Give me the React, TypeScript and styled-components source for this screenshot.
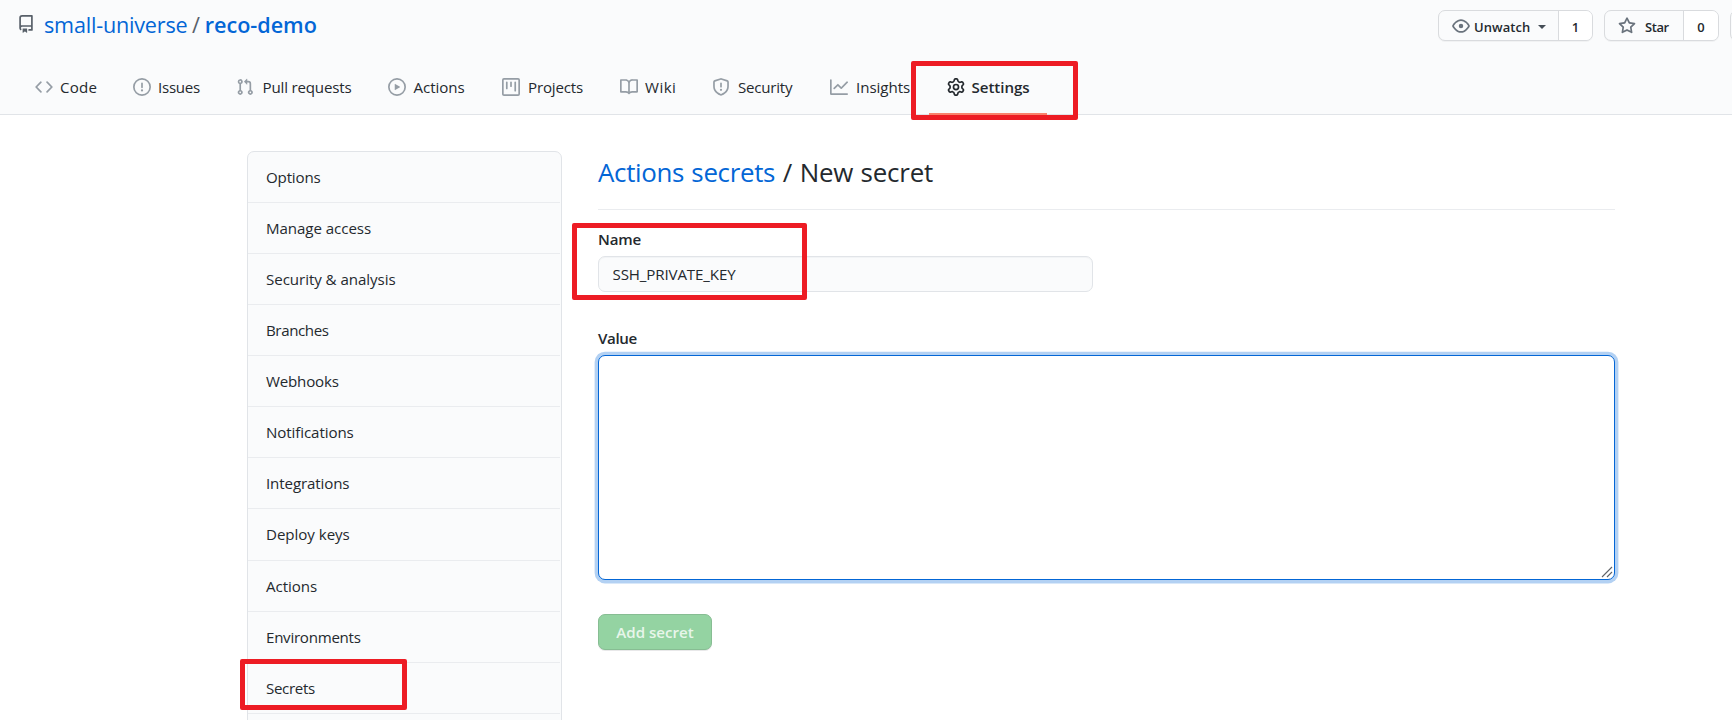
import React from "react";
import styled, { createGlobalStyle } from "styled-components";

const GlobalStyle = createGlobalStyle`
  *, *::before, *::after { box-sizing: border-box; }
  html, body { margin: 0; padding: 0; background: #fff; overflow: hidden; }
  body {
    font-family: "Open Sans", "Noto Sans", sans-serif;
    font-size: 15.12px;
    color: #24292e;
  }
  a { color: inherit; text-decoration: none; }
`;

const ICONS = {
  repo: "M2 2.5A2.5 2.5 0 014.5 0h8.75a.75.75 0 01.75.75v12.5a.75.75 0 01-.75.75h-2.5a.75.75 0 110-1.5h1.75v-2h-8a1 1 0 00-.714 1.7.75.75 0 01-1.072 1.05A2.495 2.495 0 012 11.5v-9zm10.5-1V9h-8c-.356 0-.694.074-1 .208V2.5a1 1 0 011-1h8zM5 12.25v3.25a.25.25 0 00.4.2l1.45-1.087a.25.25 0 01.3 0L8.6 15.7a.25.25 0 00.4-.2v-3.25a.25.25 0 00-.25-.25h-3.5a.25.25 0 00-.25.25z",
  code: "M4.72 3.22a.75.75 0 011.06 1.06L2.06 8l3.72 3.72a.75.75 0 11-1.06 1.06L.47 8.53a.75.75 0 010-1.06l4.25-4.25zm6.56 0a.75.75 0 10-1.06 1.06L13.94 8l-3.72 3.72a.75.75 0 101.06 1.06l4.25-4.25a.75.75 0 000-1.06l-4.25-4.25z",
  issue: "M8 1.5a6.5 6.5 0 100 13 6.5 6.5 0 000-13zM0 8a8 8 0 1116 0A8 8 0 010 8zm9 3a1 1 0 11-2 0 1 1 0 012 0zm-.25-6.25a.75.75 0 00-1.5 0v3.5a.75.75 0 001.5 0v-3.5z",
  pull: "M7.177 3.073L9.573.677A.25.25 0 0110 .854v4.792a.25.25 0 01-.427.177L7.177 3.427a.25.25 0 010-.354zM3.75 2.5a.75.75 0 100 1.5.75.75 0 000-1.5zm-2.25.75a2.25 2.25 0 113 2.122v5.256a2.251 2.251 0 11-1.5 0V5.372A2.25 2.25 0 011.5 3.25zM11 2.5h-1V4h1a1 1 0 011 1v5.628a2.251 2.251 0 101.5 0V5A2.5 2.5 0 0011 2.5zm1 10.25a.75.75 0 111.5 0 .75.75 0 01-1.5 0zM3.75 12a.75.75 0 100 1.5.75.75 0 000-1.5z",
  play: "M1.5 8a6.5 6.5 0 1113 0 6.5 6.5 0 01-13 0zM8 0a8 8 0 100 16A8 8 0 008 0zM6.379 5.227A.25.25 0 006 5.442v5.117a.25.25 0 00.379.214l4.264-2.559a.25.25 0 000-.428L6.379 5.227z",
  project: "M1.75 0A1.75 1.75 0 000 1.75v12.5C0 15.216.784 16 1.75 16h12.5A1.75 1.75 0 0016 14.25V1.75A1.75 1.75 0 0014.25 0H1.75zM1.5 1.75a.25.25 0 01.25-.25h12.5a.25.25 0 01.25.25v12.5a.25.25 0 01-.25.25H1.75a.25.25 0 01-.25-.25V1.75zM11.75 3a.75.75 0 00-.75.75v7.5a.75.75 0 001.5 0v-7.5a.75.75 0 00-.75-.75zm-8.25.75a.75.75 0 011.5 0v5.5a.75.75 0 01-1.5 0v-5.5zM8 3a.75.75 0 00-.75.75v3.5a.75.75 0 001.5 0v-3.5A.75.75 0 008 3z",
  book: "M0 1.75A.75.75 0 01.75 1h4.253c1.227 0 2.317.59 3 1.501A3.744 3.744 0 0111.006 1h4.245a.75.75 0 01.75.75v10.5a.75.75 0 01-.75.75h-4.507a2.25 2.25 0 00-1.591.659l-.622.621a.75.75 0 01-1.06 0l-.622-.621A2.25 2.25 0 005.258 13H.75a.75.75 0 01-.75-.75V1.75zm8.755 3a2.25 2.25 0 012.25-2.25H14.5v9h-3.757c-.71 0-1.4.201-1.992.572l.004-7.322zm-1.504 7.324l.004-5.073-.002-2.253A2.25 2.25 0 005.003 2.5H1.5v9h3.757a3.75 3.75 0 011.994.574z",
  shield: "M7.467.133a1.75 1.75 0 011.066 0l5.25 1.68A1.75 1.75 0 0115 3.48V7c0 1.566-.32 3.182-1.303 4.682-.983 1.498-2.585 2.813-5.032 3.855a1.7 1.7 0 01-1.33 0c-2.447-1.042-4.049-2.357-5.032-3.855C1.32 10.182 1 8.566 1 7V3.48a1.75 1.75 0 011.217-1.667l5.25-1.68zm.61 1.429a.25.25 0 00-.153 0l-5.25 1.68a.25.25 0 00-.174.238V7c0 1.358.275 2.666 1.057 3.86.784 1.194 2.121 2.34 4.366 3.297a.2.2 0 00.154 0c2.245-.956 3.582-2.104 4.366-3.298C13.225 9.666 13.5 8.36 13.5 7V3.48a.25.25 0 00-.174-.237l-5.25-1.68zM9 10.5a1 1 0 11-2 0 1 1 0 012 0zm-.25-5.75a.75.75 0 10-1.5 0v3a.75.75 0 001.5 0v-3z",
  graph: "M1.5 1.75a.75.75 0 00-1.5 0v12.5c0 .414.336.75.75.75h14.5a.75.75 0 000-1.5H1.5V1.75zm14.28 2.53a.75.75 0 00-1.06-1.06L10 7.94 7.53 5.47a.75.75 0 00-1.06 0L3.22 8.72a.75.75 0 001.06 1.06L7 7.06l2.47 2.47a.75.75 0 001.06 0l5.25-5.25z",
  gear: "M7.429 1.525a6.593 6.593 0 011.142 0c.036.003.108.036.137.146l.289 1.105c.147.56.55.967.997 1.189.174.086.341.183.501.29.417.278.97.423 1.53.27l1.102-.303c.11-.03.175.016.195.046.219.31.41.641.573.989.014.031.022.11-.059.19l-.815.806c-.411.406-.562.957-.53 1.456a4.588 4.588 0 010 .582c-.032.499.119 1.05.53 1.456l.815.806c.08.08.073.159.059.19a6.494 6.494 0 01-.573.99c-.02.029-.086.074-.195.045l-1.103-.303c-.559-.153-1.112-.008-1.529.27-.16.107-.327.204-.5.29-.449.222-.851.628-.998 1.189l-.289 1.105c-.029.11-.101.143-.137.146a6.613 6.613 0 01-1.142 0c-.036-.003-.108-.037-.137-.146l-.289-1.105c-.147-.56-.55-.967-.997-1.189a4.502 4.502 0 01-.501-.29c-.417-.278-.97-.423-1.53-.27l-1.102.303c-.11.03-.175-.016-.195-.046a6.492 6.492 0 01-.573-.989c-.014-.031-.022-.11.059-.19l.815-.806c.411-.406.562-.957.53-1.456a4.587 4.587 0 010-.582c.032-.499-.119-1.05-.53-1.456l-.815-.806c-.08-.08-.073-.159-.059-.19a6.44 6.44 0 01.573-.99c.02-.029.086-.075.195-.045l1.103.303c.559.153 1.112.008 1.529-.27.16-.107.327-.204.5-.29.449-.222.851-.628.998-1.189l.289-1.105c.029-.11.101-.143.137-.146zM8 0c-.236 0-.47.01-.701.03-.743.065-1.29.615-1.458 1.261l-.29 1.106c-.017.066-.078.158-.211.224a5.994 5.994 0 00-.668.386c-.123.082-.233.09-.3.071L3.27 2.776c-.644-.177-1.392.02-1.82.63a7.977 7.977 0 00-.704 1.217c-.315.675-.111 1.422.363 1.891l.815.806c.05.048.098.147.088.294a6.084 6.084 0 000 .772c.01.147-.038.246-.088.294l-.815.806c-.474.469-.678 1.216-.363 1.891.2.428.436.835.704 1.218.428.609 1.176.806 1.82.63l1.103-.303c.066-.019.176-.011.299.071.213.143.436.272.668.386.133.066.194.158.212.224l.289 1.106c.169.646.715 1.196 1.458 1.26a8.094 8.094 0 001.402 0c.743-.064 1.29-.614 1.458-1.26l.29-1.106c.017-.066.078-.158.211-.224a5.98 5.98 0 00.668-.386c.123-.082.233-.09.3-.071l1.102.302c.644.177 1.392-.02 1.82-.63.268-.382.505-.789.704-1.217.315-.675.111-1.422-.364-1.891l-.814-.806c-.05-.048-.098-.147-.088-.294a6.1 6.1 0 000-.772c-.01-.147.039-.246.088-.294l.814-.806c.475-.469.679-1.216.364-1.891a7.992 7.992 0 00-.704-1.218c-.428-.609-1.176-.806-1.82-.63l-1.103.303c-.066.019-.176.011-.299-.071a5.991 5.991 0 00-.668-.386c-.133-.066-.194-.158-.212-.224L10.16 1.29C9.99.645 9.444.095 8.701.031A8.094 8.094 0 008 0zm1.5 8a1.5 1.5 0 11-3 0 1.5 1.5 0 013 0zM11 8a3 3 0 11-6 0 3 3 0 016 0z",
  eye: "M1.679 7.932c.412-.621 1.242-1.75 2.366-2.717C5.175 4.242 6.527 3.5 8 3.5c1.473 0 2.824.742 3.955 1.715 1.124.967 1.954 2.096 2.366 2.717a.119.119 0 010 .136c-.412.621-1.242 1.75-2.366 2.717C10.825 11.758 9.473 12.5 8 12.5c-1.473 0-2.824-.742-3.955-1.715C2.92 9.818 2.09 8.69 1.679 8.068a.119.119 0 010-.136zM8 2c-1.981 0-3.67.992-4.933 2.078C1.797 5.169.88 6.423.43 7.1a1.619 1.619 0 000 1.798c.45.678 1.367 1.932 2.637 3.024C4.329 13.008 6.019 14 8 14c1.981 0 3.67-.992 4.933-2.078 1.27-1.091 2.187-2.345 2.637-3.023a1.619 1.619 0 000-1.798c-.45-.678-1.367-1.932-2.637-3.023C11.671 2.992 9.981 2 8 2zm0 8a2 2 0 100-4 2 2 0 000 4z",
  star: "M8 .25a.75.75 0 01.673.418l1.882 3.815 4.21.612a.75.75 0 01.416 1.279l-3.046 2.97.719 4.192a.75.75 0 01-1.088.791L8 12.347l-3.766 1.98a.75.75 0 01-1.088-.79l.72-4.194L.818 6.374a.75.75 0 01.416-1.28l4.21-.611L7.327.668A.75.75 0 018 .25zm0 2.445L6.615 5.5a.75.75 0 01-.564.41l-3.097.45 2.24 2.184a.75.75 0 01.216.664l-.528 3.084 2.769-1.456a.75.75 0 01.698 0l2.77 1.456-.53-3.084a.75.75 0 01.216-.664l2.24-2.183-3.096-.45a.75.75 0 01-.564-.41L8 2.694v.001z",
};

type IconName = keyof typeof ICONS;

const IconSvg = styled.svg<{ $color: string }>`
  width: 18px;
  height: 18px;
  flex: none;
  fill: ${(p) => p.$color};
`;

const Icon = ({ name, color }: { name: IconName; color: string }) => (
  <IconSvg viewBox="0 0 16 16" $color={color} aria-hidden="true">
    <path fillRule="evenodd" d={ICONS[name]} />
  </IconSvg>
);

const Text = styled.span<{ $track?: number }>`
  letter-spacing: ${(p) => p.$track ?? 0}px;
  white-space: nowrap;
`;

const Page = styled.div`
  position: relative;
  width: 1732px;
  height: 720px;
  overflow: hidden;
`;

const Header = styled.header`
  height: 115px;
  background: #fafbfc;
  box-shadow: inset 0 -1px 0 #e1e4e8;
`;

const TitleRow = styled.div`
  display: flex;
  justify-content: space-between;
  height: 61px;
  padding-left: 17px;
`;

const RepoTitle = styled.div`
  display: flex;
  align-items: center;
  height: 48px;
  font-size: 21.6px;
  color: #0366d6;
`;

const Owner = styled(Text)`
  margin-left: 9px;
`;

const Slash = styled.span`
  margin: 0 5px 0 4.5px;
  color: #586069;
`;

const RepoName = styled(Text)`
  font-weight: 600;
`;

const RepoActions = styled.div`
  display: flex;
  flex: none;
  gap: 11px;
  padding-top: 10px;
  width: 294px;
`;

const ButtonGroup = styled.div<{ $width: number }>`
  display: flex;
  flex: none;
  width: ${(p) => p.$width}px;
  height: 31px;
  border: 1px solid #d9dbde;
  border-radius: 7px;
  background: #fafbfc;
  box-shadow: 0 1px 0 rgba(27, 31, 35, 0.04);
  overflow: hidden;
  font-size: 12.96px;
  font-weight: 550;
`;

const ActionButton = styled.button`
  display: flex;
  align-items: center;
  flex: 1;
  gap: 4px;
  padding: 0 0 0 13px;
  border: 0;
  background: transparent;
  font: inherit;
  color: #24292e;
`;

const ButtonLabel = styled(Text)<{ $indent?: number }>`
  padding-top: 2px;
  margin-left: ${(p) => p.$indent ?? 0}px;
`;

const Caret = styled.span`
  margin: 3px 0 0 4px;
  border: 4.5px solid transparent;
  border-top-color: #444d56;
  border-bottom: 0;
`;

const Count = styled.a<{ $width: number }>`
  display: flex;
  align-items: center;
  justify-content: center;
  width: ${(p) => p.$width}px;
  padding-top: 2px;
  border-left: 1px solid #d9dbde;
  background: #fff;
`;

const TabBar = styled.nav`
  display: flex;
  padding-left: 17px;
`;

const Tab = styled.a<{ $width: number; $gap: number; $active?: boolean }>`
  display: flex;
  align-items: center;
  flex: none;
  gap: ${(p) => p.$gap}px;
  width: ${(p) => p.$width}px;
  height: 54px;
  padding-left: 18px;
  border-bottom: 2px solid ${(p) => (p.$active ? "#f9826c" : "transparent")};
  font-weight: ${(p) => (p.$active ? 600 : 400)};
`;

const Content = styled.div`
  display: flex;
  align-items: flex-start;
  gap: 36px;
  padding: 36px 0 0 247px;
`;

const Menu = styled.nav`
  flex: none;
  width: 315px;
  padding-right: 1px;
  border: 1px solid #e1e4e8;
  border-radius: 7px;
  background: #fafbfc;
`;

const MenuItem = styled.a`
  display: flex;
  align-items: center;
  height: 51.0667px;
  padding-left: 18px;
  border-bottom: 1px solid #eaecef;
`;

const Main = styled.main`
  width: 1017px;
`;

const Heading = styled.h2`
  height: 59px;
  margin: 0 0 17px;
  border-bottom: 1px solid #eaecef;
  font-size: 25.92px;
  font-weight: 400;
  line-height: 42px;
  word-spacing: 0.8px;
`;

const HeadingLink = styled(Text)`
  color: #0366d6;
`;

const Label = styled.label`
  display: block;
  margin-bottom: 5px;
  font-weight: 600;
  line-height: 24px;
  letter-spacing: -0.15px;
`;

const NameInput = styled.input`
  display: block;
  width: 495px;
  height: 36px;
  margin-bottom: 34px;
  padding: 0 13.5px;
  border: 1px solid #e1e4e8;
  border-radius: 7px;
  outline: 0;
  background: #fafbfc;
  box-shadow: inset 0 1px 0 rgba(225, 228, 232, 0.3);
  font: inherit;
  letter-spacing: -0.13px;
  color: #24292e;
`;

const ValueField = styled.div`
  position: relative;
  margin-bottom: 34px;
`;

const ValueArea = styled.textarea`
  display: block;
  width: 1017px;
  height: 225px;
  border: 1px solid #0366d6;
  border-radius: 7px;
  outline: 0;
  box-shadow: 0 0 0 3.375px rgba(3, 102, 214, 0.3);
  resize: none;
`;

const ResizeGrip = styled.svg`
  position: absolute;
  right: 2px;
  bottom: 2px;
  width: 12px;
  height: 12px;
  stroke: #5f6368;
  stroke-width: 1.1;
  fill: none;
  cursor: ns-resize;
`;

const SubmitButton = styled.button`
  width: 114px;
  height: 36px;
  padding: 0;
  border: 1px solid #87bd93;
  border-radius: 7px;
  background: #94d3a2;
  box-shadow: 0 1px 0 rgba(27, 31, 35, 0.1);
  font: inherit;
  font-weight: 600;
  color: rgba(255, 255, 255, 0.8);
`;

const Highlight = styled.div<{ $x: number; $y: number; $w: number; $h: number }>`
  position: absolute;
  left: ${(p) => p.$x}px;
  top: ${(p) => p.$y}px;
  width: ${(p) => p.$w}px;
  height: ${(p) => p.$h}px;
  border: 5px solid #ed1c24;
  border-radius: 2px;
  pointer-events: none;
`;

const tabs: { icon: IconName; label: string; width: number; gap: number; track: number; active?: boolean }[] = [
  { icon: "code", label: "Code", width: 98, gap: 7, track: 0.22 },
  { icon: "issue", label: "Issues", width: 102.5, gap: 7, track: -0.27 },
  { icon: "pull", label: "Pull requests", width: 152, gap: 9, track: -0.18 },
  { icon: "play", label: "Actions", width: 114.5, gap: 8, track: -0.06 },
  { icon: "project", label: "Projects", width: 118, gap: 8, track: -0.18 },
  { icon: "book", label: "Wiki", width: 92, gap: 7, track: 0.43 },
  { icon: "shield", label: "Security", width: 118, gap: 8, track: -0.24 },
  { icon: "graph", label: "Insights", width: 117, gap: 8, track: -0.05 },
  { icon: "gear", label: "Settings", width: 118, gap: 6.5, track: -0.06, active: true },
];

const menu: { label: string; track: number }[] = [
  { label: "Options", track: -0.18 },
  { label: "Manage access", track: -0.07 },
  { label: "Security & analysis", track: -0.06 },
  { label: "Branches", track: -0.4 },
  { label: "Webhooks", track: -0.2 },
  { label: "Notifications", track: -0.1 },
  { label: "Integrations", track: -0.12 },
  { label: "Deploy keys", track: -0.05 },
  { label: "Actions", track: -0.06 },
  { label: "Environments", track: -0.27 },
  { label: "Secrets", track: -0.34 },
];

export default function App() {
  return (
    <Page>
      <GlobalStyle />
      <Header>
        <TitleRow>
          <RepoTitle>
            <Icon name="repo" color="#586069" />
            <Owner $track={-0.2}>small-universe</Owner>
            <Slash>/</Slash>
            <RepoName $track={-0.04}>reco-demo</RepoName>
          </RepoTitle>
          <RepoActions>
            <ButtonGroup $width={155}>
              <ActionButton>
                <Icon name="eye" color="#6a737d" />
                <ButtonLabel $track={0.1}>Unwatch</ButtonLabel>
                <Caret />
              </ActionButton>
              <Count $width={34}>1</Count>
            </ButtonGroup>
            <ButtonGroup $width={115}>
              <ActionButton>
                <Icon name="star" color="#6a737d" />
                <ButtonLabel $track={-0.4} $indent={5}>Star</ButtonLabel>
              </ActionButton>
              <Count $width={35}>0</Count>
            </ButtonGroup>
            <ButtonGroup $width={115} />
          </RepoActions>
        </TitleRow>
        <TabBar>
          {tabs.map((t) => (
            <Tab key={t.label} $width={t.width} $gap={t.gap} $active={t.active}>
              <Icon name={t.icon} color={t.active ? "#24292e" : "#959da5"} />
              <Text $track={t.track}>{t.label}</Text>
            </Tab>
          ))}
        </TabBar>
      </Header>
      <Content>
        <Menu>
          {menu.map((m) => (
            <MenuItem key={m.label}>
              <Text $track={m.track}>{m.label}</Text>
            </MenuItem>
          ))}
          <MenuItem />
        </Menu>
        <Main>
          <Heading>
            <HeadingLink $track={-0.32}>Actions secrets</HeadingLink> /{" "}
            <Text $track={-0.2}>New secret</Text>
          </Heading>
          <Label>Name</Label>
          <NameInput defaultValue="SSH_PRIVATE_KEY" />
          <Label>
            <Text $track={-0.35}>Value</Text>
          </Label>
          <ValueField>
            <ValueArea />
            <ResizeGrip viewBox="0 0 12 12" aria-hidden="true">
              <path d="M1 11L11 1M6 11L11 6" />
            </ResizeGrip>
          </ValueField>
          <SubmitButton>Add secret</SubmitButton>
        </Main>
      </Content>
      <Highlight $x={911} $y={61} $w={167} $h={59} />
      <Highlight $x={572} $y={223} $w={235} $h={77} />
      <Highlight $x={240} $y={659} $w={167} $h={51} />
    </Page>
  );
}
